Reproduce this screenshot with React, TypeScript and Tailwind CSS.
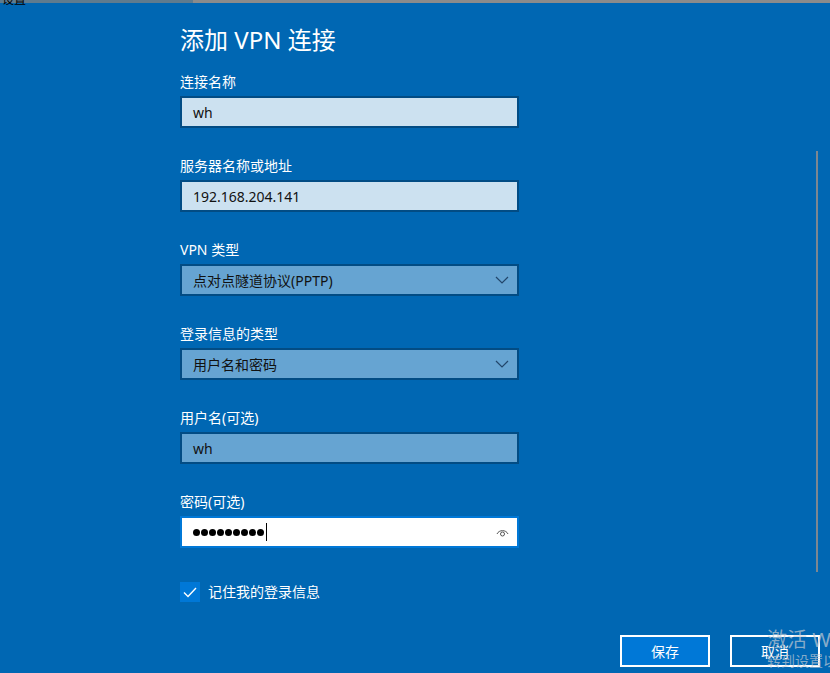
import React from 'react';

const font = { fontFamily: '"Noto Sans", "Noto Sans CJK SC", sans-serif' };

function Label({ text }: { text: string }) {
  return <div className="h-5 leading-5 text-[14px] text-white mb-1">{text}</div>;
}

function TextBox({ value, tone }: { value: string; tone: 'light' | 'mid' }) {
  return (
    <div
      className={`w-[339px] h-8 border-2 border-[#024c84] flex items-center pl-[11px] text-[14px] text-[#111] ${
        tone === 'light' ? 'bg-[#cce1f0]' : 'bg-[#66a4d2]'
      }`}
    >
      {value}
    </div>
  );
}

function Select({ value }: { value: string }) {
  return (
    <div className="w-[339px] h-8 border-2 border-[#024c84] bg-[#66a4d2] flex items-center justify-between pl-[11px] pr-[8px] text-[14px] text-[#111]">
      <span>{value}</span>
      <svg width="14" height="8" viewBox="0 0 14 8" fill="none">
        <polyline points="1,1 7,7 13,1" stroke="#23466a" strokeWidth="1.2" />
      </svg>
    </div>
  );
}

export default function App() {
  return (
    <div className="relative w-[830px] h-[673px] overflow-hidden bg-[#0067b3]" style={font}>
      <div className="flex h-[3px]">
        <div className="w-[193px] bg-[#5f7b8e]" />
        <div className="flex-1 bg-[#8b8b8b]" />
      </div>
      <div className="absolute left-[2px] top-[-8px] text-[12px] text-black leading-4">设置</div>

      <div className="pl-[180px] pt-[21px] flex flex-col">
        <h1 className="h-8 leading-8 text-[24px] text-white mb-4">添加 VPN 连接</h1>

        <Label text="连接名称" />
        <TextBox value="wh" tone="light" />

        <div className="mt-7">
          <Label text="服务器名称或地址" />
          <TextBox value="192.168.204.141" tone="light" />
        </div>

        <div className="mt-7">
          <Label text="VPN 类型" />
          <Select value="点对点隧道协议(PPTP)" />
        </div>

        <div className="mt-7">
          <Label text="登录信息的类型" />
          <Select value="用户名和密码" />
        </div>

        <div className="mt-7">
          <Label text="用户名(可选)" />
          <TextBox value="wh" tone="mid" />
        </div>

        <div className="mt-7">
          <Label text="密码(可选)" />
          <div className="w-[339px] h-8 border-2 border-[#0078d7] bg-white flex items-center justify-between pl-[11px] pr-[8px]">
            <div className="flex items-center">
              <div className="flex gap-px">
                {Array.from({ length: 9 }).map((_, i) => (
                  <span key={i} className="w-[7px] h-[7px] rounded-full bg-black" />
                ))}
              </div>
              <span className="ml-[2px] w-px h-[18px] bg-black" />
            </div>
            <svg width="13" height="9" viewBox="0 0 13 9" fill="none">
              <path d="M1 6 C3 1.5, 10 1.5, 12 6" stroke="#555" strokeWidth="1" />
              <circle cx="6.5" cy="6" r="2" stroke="#555" strokeWidth="1" />
            </svg>
          </div>
        </div>

        <div className="mt-[34px] flex items-center gap-2">
          <div className="w-5 h-5 bg-[#0078d7] flex items-center justify-center">
            <svg width="14" height="11" viewBox="0 0 14 11" fill="none">
              <polyline points="1,5.5 5,9.5 13,1" stroke="white" strokeWidth="1.4" />
            </svg>
          </div>
          <span className="text-[14px] text-white leading-5">记住我的登录信息</span>
        </div>

        <div className="mt-[33px] flex justify-end gap-5 pr-[10px]">
          <button className="w-[90px] h-8 border-2 border-white bg-[#0078d7] text-white text-[14px]">保存</button>
          <button className="w-[90px] h-8 border-2 border-white text-white text-[14px]">取消</button>
        </div>
      </div>

      <div className="absolute left-[816px] top-[151px] w-[2px] h-[421px] bg-[#7d8791]" />

      <div className="absolute left-[767px] top-[628px] whitespace-nowrap text-[#c4ccd4]/70">
        <div className="text-[20px] leading-6">激活 Windows</div>
        <div className="text-[14px] leading-[18px]">转到设置以激活 Windows。</div>
      </div>
    </div>
  );
}
